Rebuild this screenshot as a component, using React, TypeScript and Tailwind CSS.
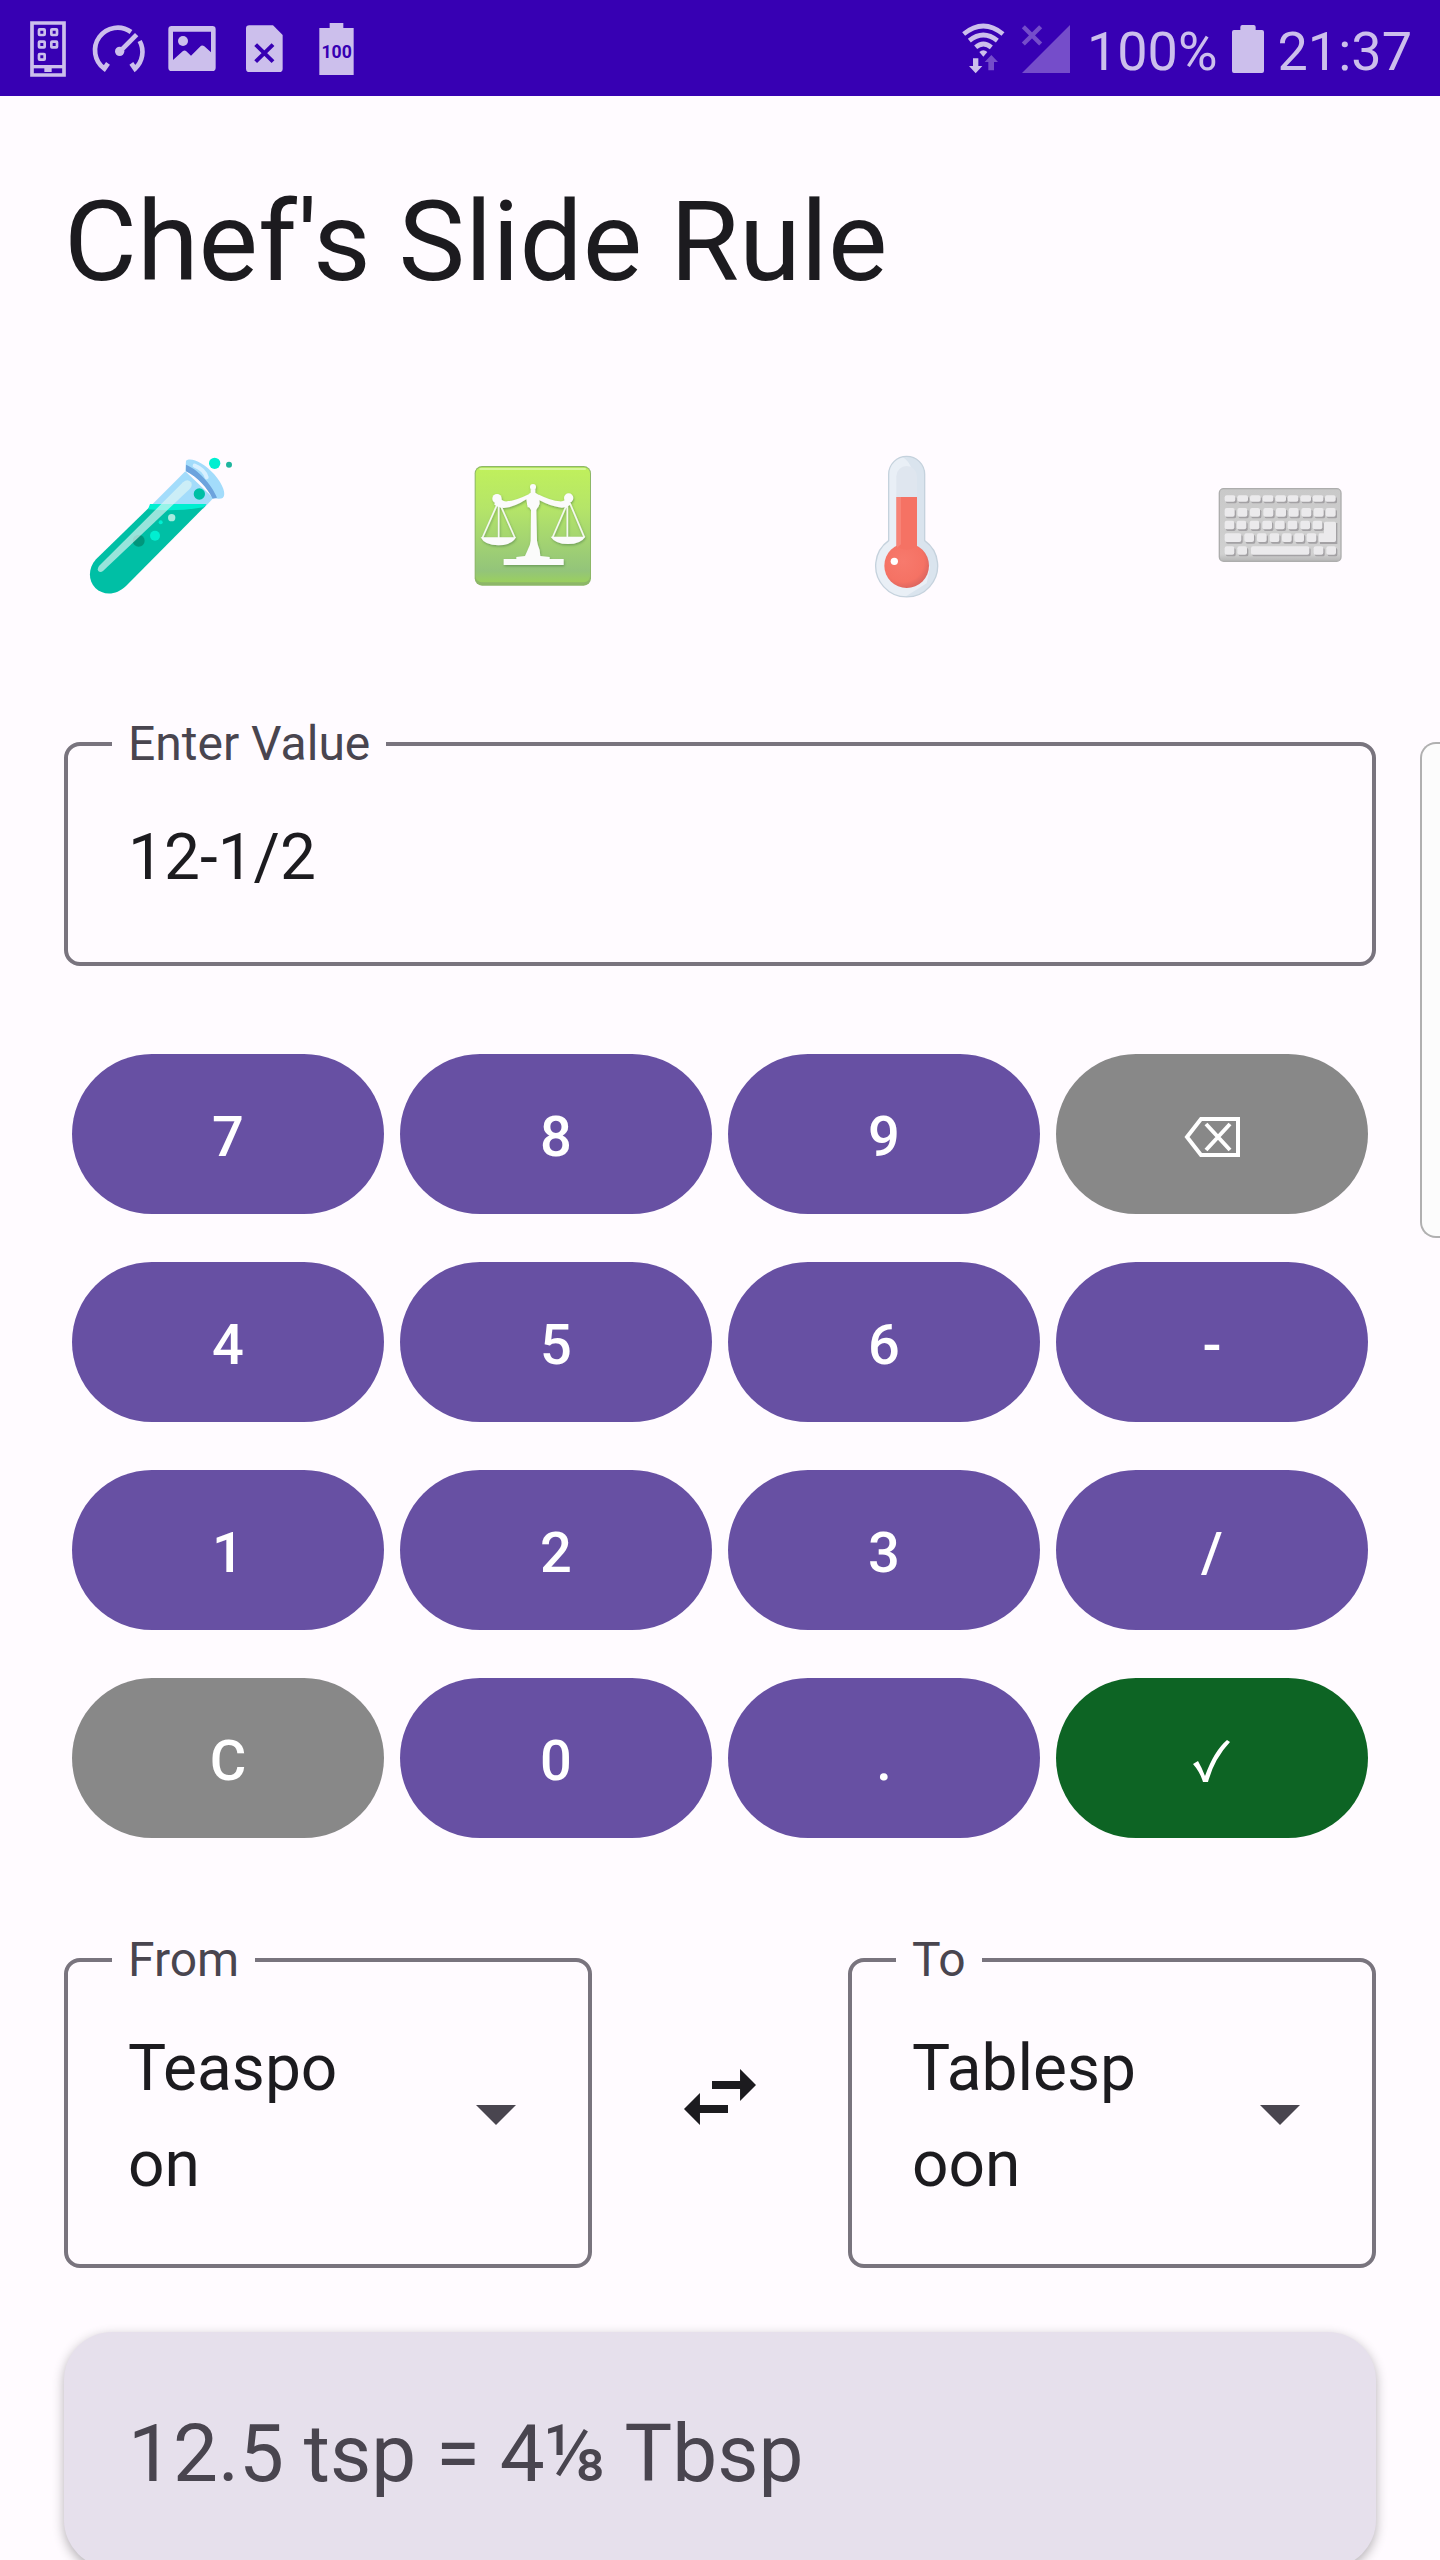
import { useState, type ReactNode } from "react";

const UNITS = ["Teaspoon", "Tablespoon", "Cup", "Pint", "Quart", "Liter"];

function StatusBar() {
  return (
    <header className="flex h-24 shrink-0 items-center justify-between bg-[#3700b3] pl-3 pr-7 text-[#ccbfec]">
      <div className="flex items-center">
        <svg viewBox="36 0 216 288" className="h-24 w-[72px]" fill="none" stroke="currentColor" aria-hidden="true">
          <path d="M96 69h96v156H96z" strokeWidth="11" />
          <path d="M96 200h96" strokeWidth="10" />
          <path d="M133 204h22v12h-22z" fill="currentColor" stroke="none" />
          <g strokeWidth="8">
            <rect x="117" y="88" width="17" height="17" rx="2" />
            <rect x="154" y="88" width="17" height="17" rx="2" />
            <rect x="117" y="125" width="17" height="17" rx="2" />
            <rect x="154" y="125" width="17" height="17" rx="2" />
            <rect x="117" y="162" width="17" height="17" rx="2" />
          </g>
        </svg>
        <svg viewBox="252 0 216 288" className="h-24 w-[72px]" fill="none" stroke="currentColor" aria-hidden="true">
          <path d="M393 96A68 68 0 0 0 313 206L324 190" strokeWidth="14" />
          <path d="M419 123A68 68 0 0 1 405 206L394 190" strokeWidth="14" />
          <path d="M360 154l50-50" strokeWidth="14" />
          <circle cx="359" cy="154" r="14" fill="currentColor" stroke="none" />
        </svg>
        <svg viewBox="468 0 216 288" className="h-24 w-[72px]" aria-hidden="true">
          <path
            fill="currentColor"
            fillRule="evenodd"
            d="M515 78h122a10 10 0 0 1 10 10v115a10 10 0 0 1-10 10H515a10 10 0 0 1-10-10V88a10 10 0 0 1 10-10zM519 95v85l29-26q6-5 11 0l14 13 27-27q6-6 13-1l20 18V95z"
          />
          <circle cx="549" cy="123" r="15" fill="currentColor" />
        </svg>
        <svg viewBox="684 0 216 288" className="h-24 w-[72px]" aria-hidden="true">
          <path fill="currentColor" d="M748 76h71l29 29v101a10 10 0 0 1-10 10h-90a10 10 0 0 1-10-10V86a10 10 0 0 1 10-10z" />
          <path d="M767 134l52 51M819 134l-52 51" stroke="#3700b3" strokeWidth="12" />
        </svg>
        <svg viewBox="900 0 216 288" className="h-24 w-[72px]" aria-label="Battery 100">
          <path fill="currentColor" d="M989 69h41v15h31v141H958V84h31z" />
          <text x="1010" y="175" textAnchor="middle" fontSize="53" fontWeight="700" fill="#3700b3" fontFamily="Roboto, sans-serif">
            100
          </text>
        </svg>
      </div>
      <div className="flex items-center text-[54px] leading-none">
        <svg viewBox="96 0 168 288" className="mr-2 h-24 w-14" fill="none" stroke="currentColor" aria-hidden="true">
          <path d="M122 102Q181 54 240 102" strokeWidth="14" />
          <path d="M139 122Q181 88 223 122" strokeWidth="14" />
          <path d="M158 142Q181 122 205 142" strokeWidth="14" />
          <path d="M169 156q12-11 24 0l-12 14z" fill="currentColor" stroke="none" />
          <path d="M150 175h16v23h12l-20 22-20-22h12z" fill="currentColor" stroke="none" />
          <path d="M196 211v-25h-11l20-21 20 21h-12v25z" fill="#754dca" stroke="none" />
        </svg>
        <svg viewBox="288 0 168 288" className="mr-3 h-24 w-14" aria-hidden="true">
          <path d="M441 75v144H297z" fill="#754dca" />
          <path d="M301 80l52 52M353 80l-52 52" stroke="#754dca" strokeWidth="13" />
        </svg>
        <span className="pt-2">100%</span>
        <svg viewBox="912 0 132 288" className="mx-2 h-24 w-11" aria-hidden="true">
          <path fill="currentColor" d="M961 75h34q6 0 6 6v9h19q6 0 6 6v117q0 6-6 6h-84q-6 0-6-6V96q0-6 6-6h19v-9q0-6 6-6z" />
        </svg>
        <time className="pt-2">21:37</time>
      </div>
    </header>
  );
}

function TestTubeIcon() {
  return (
    <svg viewBox="12 0 576 576" className="size-48" aria-hidden="true">
      <path d="M376 124L272 228 320 250 430 236 460 204z" fill="#a3dcfb" />
      <path d="M270 230L108 388C84 414 84 452 106 474 130 497 168 497 198 468L438 226z" fill="#00bfa5" />
      <path d="M270 222H440L430 232Q350 246 264 238z" fill="#00efd1" />
      <path d="M378 92C392 80 432 98 462 132 490 164 500 194 488 204Q480 208 458 204C444 176 412 138 376 122z" fill="#a3dcfb" />
      <path d="M378 104C412 118 454 160 471 203L458 206C442 174 414 142 378 124z" fill="#6ca3dd" />
      <path d="M404 107Q432 118 440 142" stroke="#d8f0ff" strokeWidth="12" strokeLinecap="round" fill="none" />
      <circle cx="236" cy="332" r="18" fill="#00967c" />
      <path d="M369 157q14-12 24 0 6 10-4 20L129 423q-8 6-14 0-4-6 2-15z" fill="#e0f6f4" fillOpacity=".68" />
      <circle cx="418" cy="192" r="17" fill="#00bfa5" />
      <circle cx="285" cy="317" r="15" fill="#00efd1" />
      <circle cx="302" cy="277" r="6" fill="#00efd1" />
      <circle cx="335" cy="263" r="11" fill="#a8ebdf" />
      <circle cx="464" cy="100" r="17" fill="#00efd1" />
      <circle cx="507" cy="104" r="9" fill="#1fb59e" />
    </svg>
  );
}

function ScalesIcon() {
  return (
    <svg viewBox="-8 -30 576 576" className="size-48" aria-hidden="true">
      <defs>
        <linearGradient id="scales-bg" x1="0" y1="0" x2="0" y2="1">
          <stop offset="0" stopColor="#c0f05c" />
          <stop offset=".35" stopColor="#b5e568" />
          <stop offset=".9" stopColor="#93c47a" />
          <stop offset="1" stopColor="#9bd05e" />
        </linearGradient>
        <filter id="scales-shadow" x="-10%" y="-10%" width="120%" height="125%">
          <feDropShadow dx="2" dy="4" stdDeviation="3" floodColor="#4f7f4a" floodOpacity=".6" />
        </filter>
      </defs>
      <rect x="105" y="78" width="349" height="359" rx="22" fill="#8db768" />
      <rect x="108" y="82" width="343" height="345" rx="18" fill="url(#scales-bg)" />
      <path d="M122 87h314" stroke="#d6f79a" strokeWidth="6" strokeLinecap="round" />
      <g filter="url(#scales-shadow)" fill="#fbfbfb">
        <path d="M174 190L128 294M177 190v106M180 190l46 104M384 188l-46 106M383 188v106M390 188l44 104" stroke="#f4f9ef" strokeWidth="5" fill="none" />
        <path d="M123 292h106q-12 24-53 24t-53-24zM333 290h104q-14 22-52 22t-52-22z" />
        <circle cx="172" cy="176" r="14" />
        <circle cx="387" cy="174" r="14" />
        <path d="M172 162q14 24 30 22 26-2 62-20h34q36 18 62 20 18 2 26-20l6 30q-16 12-34 8-26-4-60-22l-2 22h-32l-4-24q-36 24-68 26-14 0-28-10z" />
        <circle cx="280" cy="141" r="9" />
        <path d="M273 148h14v10q10 4 12 14l1 20-10 18 2 92q2 14 8 28l2 18 28 3v6h42v18H192v-18h38v-6l26-3 8-18q8-14 9-28l1-92-12-18 2-24q2-8 9-10z" />
      </g>
    </svg>
  );
}

function ThermometerIcon() {
  return (
    <svg viewBox="-88 0 576 576" className="size-48" aria-hidden="true">
      <defs>
        <clipPath id="thermo-glass">
          <path d="M145 332V133a54 54 0 0 1 108 0v199a93 93 0 1 1-108 0z" />
        </clipPath>
        <radialGradient id="thermo-bulb" cx=".42" cy=".4" r=".62">
          <stop offset="0" stopColor="#f77a6d" />
          <stop offset=".75" stopColor="#f57264" />
          <stop offset="1" stopColor="#dd665f" />
        </radialGradient>
      </defs>
      <g clipPath="url(#thermo-glass)">
        <path d="M95 70h210v440H95z" fill="#e9eff6" />
        <path d="M185 80q34 20 34 70v190l50 70-10 50-80 50h130V70z" fill="#dae4ee" />
      </g>
      <path d="M145 332V133a54 54 0 0 1 108 0v199a93 93 0 1 1-108 0z" fill="none" stroke="#c5d2dd" strokeWidth="4" />
      <path d="M168 201v-62a31 31 0 0 1 62 0v62z" fill="#dfe6ef" />
      <circle cx="199" cy="407" r="67" fill="url(#thermo-bulb)" />
      <path d="M168 201h62v148q-30 20-62 0z" fill="#f57264" />
      <path d="M170 201h12v142l-12 10z" fill="#f98f83" fillOpacity=".6" />
      <circle cx="162" cy="394" r="11" fill="#fff" />
    </svg>
  );
}

const KEYCAPS: [number, number, number, number][] = [
  ...[104, 142, 180, 218, 256, 293, 331, 368, 405].map((x): [number, number, number, number] => [x, 106, 32, 19]),
  ...[104, 142, 180, 220, 258, 296, 334, 371, 407].map((x): [number, number, number, number] => [x, 144, 30, 26]),
  ...[104, 140, 179, 217, 255, 293, 331, 368].map((x): [number, number, number, number] => [x, 182, 29, 26]),
  [104, 220, 50, 26],
  ...[163, 201, 239, 276, 313, 350].map((x): [number, number, number, number] => [x, 220, 29, 26]),
  [104, 259, 29, 25],
  [142, 259, 29, 25],
  [183, 259, 175, 25],
  [371, 259, 29, 25],
  [409, 259, 29, 25],
];

function KeyboardIcon() {
  return (
    <svg viewBox="-18 -90 576 576" className="size-48" aria-hidden="true">
      <defs>
        <linearGradient id="keyboard-body" x1="0" y1="0" x2="0" y2="1">
          <stop offset="0" stopColor="#c9c9c9" />
          <stop offset=".9" stopColor="#d0d0d0" />
          <stop offset="1" stopColor="#b5b5b5" />
        </linearGradient>
      </defs>
      <rect x="88" y="86" width="365" height="218" rx="13" fill="url(#keyboard-body)" stroke="#adadad" strokeWidth="4" />
      <g fill="#a3a1a4">
        {KEYCAPS.map(([x, y, w, h]) => (
          <rect key={`${x}-${y}`} x={x + 4} y={y + 5} width={w} height={h} rx="5" />
        ))}
        <path d="M406 189h36v63h-52v-29h16z" />
      </g>
      <g fill="#ebeaec">
        {KEYCAPS.map(([x, y, w, h]) => (
          <rect key={`${x}-${y}`} x={x} y={y} width={w} height={h} rx="6" />
        ))}
        <path d="M407 185h26q5 0 5 5v51q0 5-5 5h-43q-4 0-4-5v-17q0-4 5-4h11v-30q0-5 5-5z" />
      </g>
    </svg>
  );
}

function BackspaceIcon() {
  return (
    <svg viewBox="0 0 56 40" className="h-10 w-14" fill="none" stroke="currentColor" strokeWidth="4" aria-hidden="true">
      <path d="M3 20L17 2h37v36H17z" />
      <path d="M22 7l24 26M46 7L22 33" />
    </svg>
  );
}

function CheckIcon() {
  return (
    <svg viewBox="0 0 40 44" className="h-11 w-10" fill="currentColor" aria-hidden="true">
      <path d="M1 25l5-3q4 7 7 15Q22 12 35 1l3 2Q22 20 16 43h-5Q8 33 1 25z" />
    </svg>
  );
}

type Key = { id: string; face?: ReactNode; tone?: "gray" | "green" };

const KEYS: Key[] = [
  { id: "7" },
  { id: "8" },
  { id: "9" },
  { id: "Backspace", face: <BackspaceIcon />, tone: "gray" },
  { id: "4" },
  { id: "5" },
  { id: "6" },
  { id: "-" },
  { id: "1" },
  { id: "2" },
  { id: "3" },
  { id: "/" },
  { id: "C", tone: "gray" },
  { id: "0" },
  { id: "." },
  { id: "Done", face: <CheckIcon />, tone: "green" },
];

function keyColor(tone?: "gray" | "green") {
  if (tone === "gray") return "bg-[#888888]";
  if (tone === "green") return "bg-[#0d6424]";
  return "bg-[#6750a3]";
}

const LABEL = "absolute -top-0.5 left-11 -translate-y-1/2 bg-[#fffbff] px-4 text-5xl leading-none text-[#49454f]";

function UnitField({ id, label, value, onChange }: { id: string; label: string; value: string; onChange: (v: string) => void }) {
  return (
    <div className="min-w-0 flex-1 pt-8">
      <div className="relative flex items-center justify-between rounded-2xl border-4 border-[#79747e] pr-11 pl-[60px]">
        <label htmlFor={id} className={LABEL}>
          {label}
        </label>
        <span aria-hidden="true" className="box-content w-60 pt-[59px] pb-[51px] text-[64px] leading-[96px] break-all">
          {value}
        </span>
        <svg viewBox="0 0 24 24" className="size-24 shrink-0" fill="#49454f" aria-hidden="true">
          <path d="M7 10l5 5 5-5z" />
        </svg>
        <select
          id={id}
          value={value}
          onChange={(e) => onChange(e.target.value)}
          className="absolute inset-0 size-full cursor-pointer opacity-0"
        >
          {UNITS.map((u) => (
            <option key={u}>{u}</option>
          ))}
        </select>
      </div>
    </div>
  );
}

export default function App() {
  const [value, setValue] = useState("12-1/2");
  const [from, setFrom] = useState("Teaspoon");
  const [to, setTo] = useState("Tablespoon");

  const press = (id: string) => {
    if (id === "C") setValue("");
    else if (id === "Backspace") setValue((v) => v.slice(0, -1));
    else if (id !== "Done") setValue((v) => v + id);
  };

  return (
    <div className="relative flex h-screen flex-col overflow-hidden bg-[#fffbff] font-['Roboto',sans-serif] text-[#1c1b1f]">
      <StatusBar />
      <main className="min-h-0 flex-1 overflow-y-auto px-16 pt-[74px] pb-8 [scrollbar-width:none]">
        <h1 className="text-[112px] leading-[144px]">Chef's Slide Rule</h1>

        <nav className="mt-[116px] flex justify-between" aria-label="Modes">
          <button type="button" aria-label="Volume">
            <TestTubeIcon />
          </button>
          <button type="button" aria-label="Weight">
            <ScalesIcon />
          </button>
          <button type="button" aria-label="Temperature">
            <ThermometerIcon />
          </button>
          <button type="button" aria-label="Keyboard">
            <KeyboardIcon />
          </button>
        </nav>

        <div className="relative mt-[120px] rounded-2xl border-4 border-[#79747e]">
          <label htmlFor="amount" className={LABEL}>
            Enter Value
          </label>
          <input
            id="amount"
            type="text"
            value={value}
            onChange={(e) => setValue(e.target.value)}
            className="block h-54 w-full bg-transparent px-[60px] pt-1.5 text-[64px] outline-none"
          />
        </div>

        <div className="mt-22 grid grid-cols-4 gap-x-4 gap-y-12 px-2">
          {KEYS.map(({ id, face, tone }) => (
            <button
              key={id}
              type="button"
              aria-label={id}
              onClick={() => press(id)}
              className={`flex h-40 items-center justify-center rounded-full pt-1.5 text-[56px] font-medium text-white ${keyColor(tone)}`}
            >
              {face ?? id}
            </button>
          ))}
        </div>

        <div className="mt-22 flex items-center">
          <UnitField id="from" label="From" value={from} onChange={setFrom} />
          <button
            type="button"
            aria-label="Swap units"
            className="flex w-64 justify-center"
            onClick={() => {
              setFrom(to);
              setTo(from);
            }}
          >
            <svg viewBox="0 0 24 24" className="size-24" fill="currentColor" aria-hidden="true">
              <path d="M6.99 11L3 15l3.99 4v-3H14v-2H6.99v-3zM21 9l-3.99-4v3H10v2h7.01v3L21 9z" />
            </svg>
          </button>
          <UnitField id="to" label="To" value={to} onChange={setTo} />
        </div>

        <output
          htmlFor="amount from to"
          className="mt-16 block rounded-[48px] bg-[#e6e0ec] px-16 pt-16 pb-14 text-[80px] leading-[116px] text-[#49454f] shadow-[0_4px_12px_rgba(0,0,0,0.3)]"
        >
          12.5 tsp = 4⅛ Tbsp
        </output>
      </main>
      <div className="absolute top-[742px] right-0 h-[496px] w-5 rounded-l-2xl border-2 border-r-0 border-[#b0b0b0] bg-[#fcfcfc]" />
    </div>
  );
}
